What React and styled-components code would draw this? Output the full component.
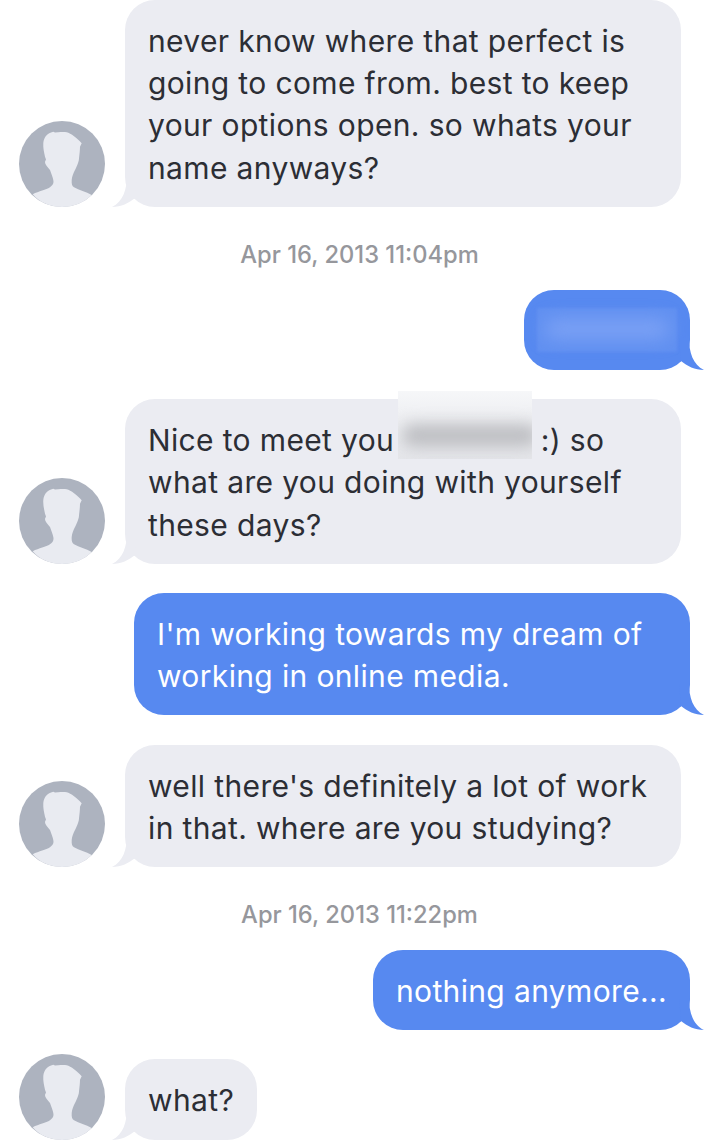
import React from 'react'
import styled, { createGlobalStyle } from 'styled-components'

const GlobalStyle = createGlobalStyle`
  html, body {
    margin: 0;
    padding: 0;
    background: #fff;
  }
  body {
    font-family: Inter, "Liberation Sans", sans-serif;
    overflow: hidden;
  }
`

const Thread = styled.div`
  width: 719px;
  height: 1144px;
  box-sizing: border-box;
  padding: 0 29px 0 19px;
  display: flex;
  flex-direction: column;
  overflow: hidden;
`

const Row = styled.div`
  display: flex;
  align-items: flex-end;
  gap: 20px;
  justify-content: ${p => (p.$out ? 'flex-end' : 'flex-start')};
  margin-bottom: ${p => (p.$last ? 0 : '29.2px')};
`

const Bubble = styled.div`
  position: relative;
  box-sizing: border-box;
  max-width: 556px;
  padding: 20px 23px 18px;
  border-radius: 30px;
  font-size: 30px;
  line-height: 42.2px;
  letter-spacing: 0.36px;
  background: ${p => (p.$out ? '#5789f0' : '#ebecf2')};
  color: ${p => (p.$out ? '#fff' : '#2c2e35')};
`

const TailShape = styled.svg`
  position: absolute;
  bottom: -2px;
  ${p => (p.$out ? 'right: -15px;' : 'left: -14px; transform: scaleX(-1);')}
`

const Stamp = styled.div`
  height: 24px;
  margin: 36px -29px 23px -19px;
  text-align: center;
  font-size: 23.7px;
  line-height: 24px;
  font-weight: 500;
  color: #96979c;
`

const Hidden = styled.span`
  position: relative;
  display: inline-block;
  width: 134px;
  height: 1em;
  margin-left: -5px;
  vertical-align: baseline;
`

const HiddenPatch = styled.span`
  position: absolute;
  left: 0;
  top: -30px;
  width: 134px;
  height: 68px;
  overflow: hidden;
  background: linear-gradient(#f6f7f9, #eff0f3 35%, #e5e6ea);
  &::after {
    content: '';
    position: absolute;
    left: 4px;
    right: -6px;
    top: 33px;
    height: 23px;
    border-radius: 10px;
    background: #bdbec2;
    filter: blur(8px);
  }
`

const HiddenName = styled.div`
  position: relative;
  width: 120px;
  height: 42.2px;
  &::before {
    content: '';
    position: absolute;
    inset: -2px -10px 0 -10px;
    background: #6190f1;
    filter: blur(1.5px);
  }
  &::after {
    content: '';
    position: absolute;
    left: -2px;
    right: -2px;
    top: 10px;
    height: 18px;
    border-radius: 10px;
    background: #7ea3f5;
    filter: blur(9px);
  }
`

const AvatarWrap = styled.svg`
  flex: none;
  display: block;
  width: 86px;
  height: 86px;
  margin-top: -10px;
`

function Avatar() {
  return (
    <AvatarWrap viewBox="0 0 86 86">
      <circle cx="43" cy="43" r="43" fill="#adb3bf" />
      <path
        fill="#e9ebf1"
        d="M13.7 73.3 C20 70 27 69 31 66.3 C34 64 35 62 34.3 59 C33.5 55 32 52 31 49 C29 46 26 44 26 40.7 L27 38.5 L26 35.7 C25 31 24 27 24.3 22.3 C24.5 18 27 13 32 11.5 L34.3 10.7 L36 11.6 L39.3 11.3 C43 10.8 46 11 47.7 11.3 C52 12.5 58 17 62.7 22.3 L61 25.7 C61 29 60.5 33 60 37.3 C60 40 59 42 58.3 44 C57.5 46 57 47 56 49 C54.5 52 53 55 52.7 59 C52.5 63 53 65 55 66.3 C60 69 67 71 72.7 74 C65 82 54 86 43 86 C31 86 20 81 13.7 73.3 Z"
      />
    </AvatarWrap>
  )
}

function Tail({ out }) {
  return (
    <TailShape $out={out} width="26" height="34" viewBox="0 0 26 34">
      <path
        fill={out ? '#5789f0' : '#ebecf2'}
        d="M0 0 H10 C10 14 14 27 25 32 C16 32 8 28 2 23 Z"
      />
    </TailShape>
  )
}

function Incoming({ children, last }) {
  return (
    <Row $last={last}>
      <Avatar />
      <Bubble>
        {children}
        <Tail />
      </Bubble>
    </Row>
  )
}

function Outgoing({ children }) {
  return (
    <Row $out>
      <Bubble $out>
        {children}
        <Tail out />
      </Bubble>
    </Row>
  )
}

export default function App() {
  return (
    <>
      <GlobalStyle />
      <Thread>
        <Incoming last>
          never know where that perfect is going to come from. best to keep your options open. so whats your name anyways?
        </Incoming>
        <Stamp>Apr 16, 2013 11:04pm</Stamp>
        <Outgoing>
          <HiddenName />
        </Outgoing>
        <Incoming>
          Nice to meet you <Hidden><HiddenPatch /></Hidden> :) so what are you doing with yourself these days?
        </Incoming>
        <Outgoing>I'm working towards my dream of working in online media.</Outgoing>
        <Incoming last>well there's definitely a lot of work in that. where are you studying?</Incoming>
        <Stamp>Apr 16, 2013 11:22pm</Stamp>
        <Outgoing>nothing anymore...</Outgoing>
        <Incoming last>what?</Incoming>
      </Thread>
    </>
  )
}
